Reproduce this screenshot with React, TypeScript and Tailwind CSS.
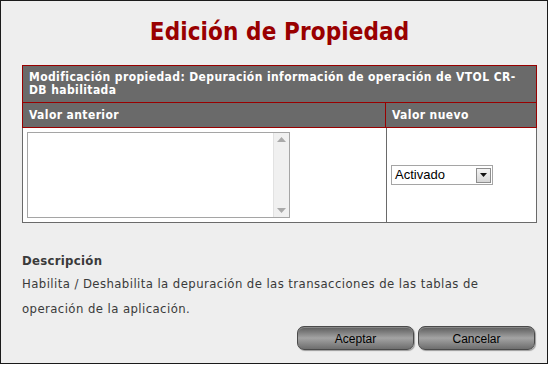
import React from 'react'

const font = { fontFamily: '"DejaVu Sans Condensed", "DejaVu Sans", Tahoma, sans-serif' }

function FakeTextarea() {
  return (
    <div className="flex w-[263px] h-[86px] border border-[#a5a5a5] bg-white">
      <div className="flex-1" />
      <div className="flex w-[16px] flex-col items-center justify-between border-l border-[#e2e2e2] bg-[#f0f0f0] py-[4px]">
        <svg width="9" height="5" viewBox="0 0 9 5"><path d="M0 5 L4.5 0 L9 5 Z" fill="#a9a9a9" /></svg>
        <svg width="9" height="5" viewBox="0 0 9 5"><path d="M0 0 L4.5 5 L9 0 Z" fill="#a9a9a9" /></svg>
      </div>
    </div>
  )
}

function FakeSelect() {
  return (
    <div className="flex items-center w-[102px] h-[20px] border border-[#a5a5a5] bg-white pl-[3px] pr-[1px]">
      <span className="flex-1 text-[13px] text-black" style={{ fontFamily: '"Liberation Sans", Arial, sans-serif' }}>Activado</span>
      <div className="flex w-[15px] h-[15px] items-center justify-center border border-[#8e8e8e] bg-gradient-to-b from-[#f4f4f4] to-[#d6d6d6]">
        <svg width="7" height="4" viewBox="0 0 7 4"><path d="M0 0 L3.5 4 L7 0 Z" fill="#111" /></svg>
      </div>
    </div>
  )
}

function Boton({ label }: { label: string }) {
  return (
    <button
      className="w-[117px] h-[24px] rounded-[7px] border border-[#4a4a4a] bg-gradient-to-b from-[#5c5c5c] via-[#a4a4a4] to-[#6e6e6e] pt-[1px] text-[12px] text-black shadow-[inset_0_1px_0_rgba(255,255,255,0.25),1px_1px_1px_rgba(0,0,0,0.35)]"
      style={{ fontFamily: '"Liberation Sans", Arial, sans-serif' }}
    >
      {label}
    </button>
  )
}

export default function App() {
  return (
    <div className="w-[550px] h-[365px] bg-white" style={font}>
      <div className="flex h-[364px] w-[548px] flex-col border border-[#1a1a1a] bg-[#eeeeee] pl-[21px]">
        <h1 className="mt-[17px] w-[515px] text-center text-[24px] leading-[28px] font-bold tracking-[0.1px] text-[#990000]">
          Edición de Propiedad
        </h1>

        <div className="mt-[19px] w-[515px]">
          <div className="border border-[#990000] bg-[#6a6a6a] text-white font-bold">
            <div className="h-[36px] px-[6px] pt-[5px] text-[12px] leading-[13px] tracking-[0.4px]">
              Modificación propiedad: Depuración información de operación de VTOL CR-<br />DB habilitada
            </div>
            <div className="grid grid-cols-[362px_1fr] border-t border-[#990000] text-[12px] tracking-[0.4px]">
              <div className="h-[24px] px-[6px] leading-[24px]">Valor anterior</div>
              <div className="h-[24px] border-l border-[#990000] px-[6px] leading-[24px]">Valor nuevo</div>
            </div>
          </div>
          <div className="grid h-[95px] grid-cols-[363px_1fr] border border-t-0 border-[#6a6a6a] bg-white">
            <div className="pl-[4px] pt-[4px]">
              <FakeTextarea />
            </div>
            <div className="flex items-center border-l border-[#6a6a6a] pl-[4px]">
              <FakeSelect />
            </div>
          </div>
        </div>

        <div className="mt-[30px] text-[13px] leading-[16px] font-bold tracking-[0.3px] text-[#3a3a3a]">Descripción</div>
        <p className="mt-[2px] w-[480px] text-[13px] leading-[25px] tracking-[0.42px] text-[#3a3a3a]">
          Habilita / Deshabilita la depuración de las transacciones de las tablas de<br />operación de la aplicación.
        </p>

        <div className="mt-[5px] flex w-[513px] justify-end gap-[4px]">
          <Boton label="Aceptar" />
          <Boton label="Cancelar" />
        </div>
      </div>
    </div>
  )
}
